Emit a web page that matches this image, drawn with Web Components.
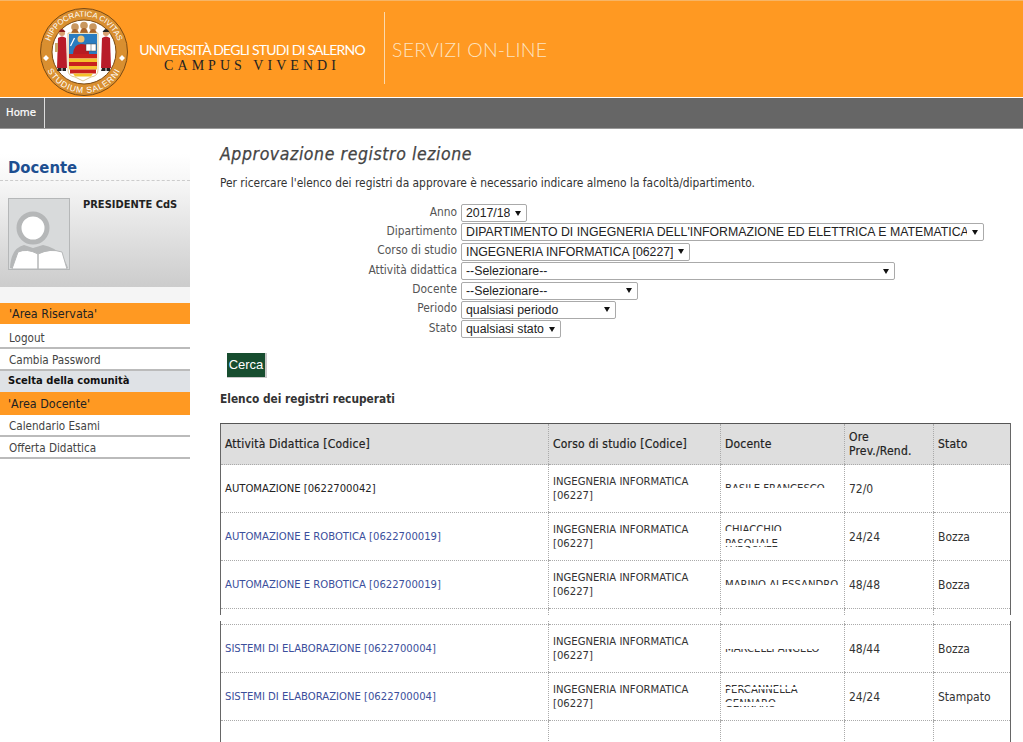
<!DOCTYPE html>
<html lang="it">
<head>
<meta charset="utf-8">
<title>Approvazione registro lezione</title>
<style>
html, body { margin: 0; height: 742px; overflow: hidden; background: #fff; }
body { font: 12px "DejaVu Sans Condensed", "DejaVu Sans", sans-serif; color: #333; }
.page { display: grid; grid-template-columns: 190px 1fr; column-gap: 30px; padding-top: 13px; }
</style>
</head>
<body>
<uni-header></uni-header>
<nav-bar>Home</nav-bar>
<div class="page">
  <side-bar></side-bar>
  <main>
    <search-form></search-form>
    <register-table></register-table>
  </main>
</div>

<script>
const headerTpl = document.createElement("template");
headerTpl.innerHTML = `
<style>
:host { display: flex; align-items: flex-start; height: 97px; background: #ff9922; border-top: 1px solid #f7b566; box-sizing: border-box; padding-left: 37px; }
svg { width: 94px; height: 94px; flex: none; margin-top: 4px; }
.mark { width: 236px; margin: 40px 0 0 3px; text-align: center; }
.uni { font: 400 14px/17px Lato, sans-serif; color: #fff; letter-spacing: -0.78px; white-space: nowrap; }
.motto { font: 14px/15px "Liberation Serif", serif; color: #222; letter-spacing: 4.05px; white-space: nowrap; }
.rule { width: 1px; height: 72px; background: #fbd9ac; margin: 11px 0 0 14px; }
.title { font: 300 19.500px/24px Lato, sans-serif; color: #fde3c0; margin: 37px 0 0 7px; white-space: nowrap; letter-spacing: 0.25px; }
</style>
<svg viewBox="0 0 94 94" role="img" aria-label="Sigillo">
  <defs>
    <path id="arcTop" d="M11.500 47a35.500 35.500 0 0 1 71 0"/>
    <path id="arcBot" d="M8.500 61a41 41 0 0 0 77 0"/>
  </defs>
  <circle cx="47" cy="47" r="43.500" fill="#d98f30" stroke="#7a4a14" stroke-width="1"/>
  <circle cx="47" cy="47" r="32" fill="#fff" stroke="#7a4a14" stroke-width="1"/>
  <text font-family="Liberation Sans, sans-serif" font-size="7.800" fill="#fff"><textPath href="#arcTop" startOffset="50%" text-anchor="middle">HIPPOCRATICA CIVITAS</textPath></text>
  <text font-family="Liberation Sans, sans-serif" font-size="8.500" fill="#fff" letter-spacing="0.8"><textPath href="#arcBot" startOffset="50%" text-anchor="middle">STUDIUM SALERNI</textPath></text>
  <path d="M6 53l3-3 3 3-3 3zM82 53l3-3 3 3-3 3z" fill="#fff"/>
  <!-- three heads above the shield -->
  <g fill="#c9975e"><circle cx="38" cy="22" r="3.800"/><circle cx="47" cy="20.500" r="3.800"/><circle cx="56" cy="22" r="3.800"/></g>
  <path d="M34 29q1-5 4-5t4 5zM43 28q1-5 4-5t4 5zM52 29q1-5 4-5t4 5z" fill="#a8642c"/>
  <!-- shield -->
  <path d="M31 28h30v37q0 6-7 7l-8 4-8-4q-7-1-7-7z" fill="#fff" stroke="#c9a24a" stroke-width=".6"/>
  <rect x="32" y="29" width="28" height="20" fill="#2a7cc0"/>
  <rect x="32" y="49" width="28" height="4.500" fill="#c8201e"/>
  <rect x="32" y="53.500" width="28" height="3.500" fill="#f4c22c"/>
  <rect x="32" y="57" width="28" height="4" fill="#c8201e"/>
  <rect x="32" y="61" width="28" height="3.500" fill="#f4c22c"/>
  <rect x="33" y="64.500" width="26" height="4" fill="#c8201e"/>
  <path d="M36 68.500h20l-2 3h-16z" fill="#f4c22c"/>
  <!-- seated doctor with book -->
  <circle cx="44" cy="34" r="3.500" fill="#f0c070"/>
  <path d="M36 49q1-10 8-10 6 0 8 3v7z" fill="#b81c22"/>
  <path d="M49 39h10v7H49z" fill="#fff" stroke="#444" stroke-width=".5"/>
  <path d="M54 39v7" stroke="#444" stroke-width=".5"/>
  <path d="M33.500 41l4-8" stroke="#fff" stroke-width="1.200"/>
  <!-- side figures -->
  <g>
    <circle cx="25" cy="28" r="3" fill="#d8a070"/>
    <path d="M21.500 27q3.500-6 7 0z" fill="#8c1c1c"/>
    <path d="M21 33q4-3 8 0l1 30h-10z" fill="#b81c2a"/>
    <path d="M21 63h3.500v3h-4.500zM25.500 63h3.500v3h-3.500z" fill="#222"/>
    <path d="M18 38h3v9h-3z" fill="#c9a86a"/>
  </g>
  <g transform="translate(44 0)">
    <circle cx="25" cy="28" r="3" fill="#d8a070"/>
    <path d="M21.500 27q3.500-6 7 0z" fill="#222"/>
    <path d="M21 33q4-3 8 0l1 30h-10z" fill="#b81c2a"/>
    <path d="M21 63h3.500v3h-4.500zM25.500 63h3.500v3h-3.500z" fill="#222"/>
  </g>
</svg>
<div class="mark">
  <div class="uni">UNIVERSITÀ DEGLI STUDI DI SALERNO</div>
  <div class="motto">CAMPUS VIVENDI</div>
</div>
<div class="rule"></div>
<div class="title">SERVIZI ON-LINE</div>
`;
class UniHeader extends HTMLElement {
  constructor() {
    super();
    this.attachShadow({ mode: "open" });
    this.shadowRoot.appendChild(headerTpl.content.cloneNode(true));
  }
}
customElements.define("uni-header", UniHeader);

const navTpl = document.createElement("template");
navTpl.innerHTML = `
<style>
:host { display: flex; height: 32px; box-sizing: border-box; background: #666; border-top: 1px solid #fff; border-bottom: 1px solid #999; font: 11.300px "DejaVu Sans Condensed", sans-serif; color: #fff; -webkit-text-stroke: .2px #fff; }
.tab { width: 45px; padding-left: 6px; box-sizing: border-box; border-right: 1px solid #ddd; line-height: 30px; }
</style>
<div class="tab"><slot></slot></div>
`;
class NavBar extends HTMLElement {
  constructor() {
    super();
    this.attachShadow({ mode: "open" });
    this.shadowRoot.appendChild(navTpl.content.cloneNode(true));
  }
}
customElements.define("nav-bar", NavBar);

const sideTpl = document.createElement("template");
sideTpl.innerHTML = `
<style>
:host { display: block; margin-top: 12px; font: 11.600px "DejaVu Sans Condensed", sans-serif; color: #444; }
.card { height: 133px; box-sizing: border-box; background: linear-gradient(#fff 0, #f6f6f6 22%, #ccc 100%); padding: 0 0 0 8px; }
h2 { margin: 0 0 0 -8px; padding: 0 0 0 8px; height: 26px; font: bold 16.500px/28px "DejaVu Sans Condensed", sans-serif; color: #1d4f91; border-bottom: 1px dashed #ccc; }
.who { display: flex; margin-top: 17px; }
.who svg { width: 62px; height: 72px; flex: none; }
.role { margin: 0 0 0 13px; font: bold 11px/14px "DejaVu Sans Condensed", sans-serif; color: #222; }
.gap { height: 16px; background: #f5f5f5; }
.head, .item, .sec { display: block; box-sizing: border-box; padding-left: 9px; }
.head { height: 21px; line-height: 21px; background: #ff9922; color: #222; font-size: 12.400px; }
.head.b { height: 23px; line-height: 24px; padding-left: 8px; }
.item { height: 22px; line-height: 23px; border-bottom: 2px solid #bbb; }
.item.first { height: 25px; line-height: 28px; }
.sec { height: 21px; line-height: 20px; background: #dfe2e6; color: #111; font-weight: 700; font-size: 11.100px; padding-left: 8px; }
</style>
<div class="card">
  <h2>Docente</h2>
  <div class="who">
    <svg viewBox="0 0 62 72" aria-hidden="true">
      <rect x=".5" y=".5" width="61" height="71" fill="#d8dadb" stroke="#b5b7b8"/>
      <circle cx="25" cy="30" r="14" fill="#fff" stroke="#b5b7b8" stroke-width="5"/>
      <path d="M2 70q1-20 14-23l9 3 10-3q18 3 25 23z" fill="#b5b7b8"/>
      <path d="M10 54q9-4 20 2v15H4zM30 56q12-6 24-2l5 17H30z" fill="#fff" stroke="#b5b7b8"/>
    </svg>
    <p class="role">PRESIDENTE CdS</p>
  </div>
</div>
<div class="gap"></div>
<div class="head">'Area Riservata'</div>
<div class="item first">Logout</div>
<div class="item">Cambia Password</div>
<div class="sec">Scelta della comunità</div>
<div class="head b">'Area Docente'</div>
<div class="item">Calendario Esami</div>
<div class="item">Offerta Didattica</div>
`;
class SideBar extends HTMLElement {
  constructor() {
    super();
    this.attachShadow({ mode: "open" });
    this.shadowRoot.appendChild(sideTpl.content.cloneNode(true));
  }
}
customElements.define("side-bar", SideBar);

// small solid triangle like the old chrome select arrow
const arrow = "url(\"data:image/svg+xml,%3Csvg xmlns='http://www.w3.org/2000/svg' width='6' height='5'%3E%3Cpath d='M0 0h6L3 5z' fill='%23111'/%3E%3C/svg%3E\")";

const formTpl = document.createElement("template");
formTpl.innerHTML = `
<style>
:host { display: block; font: 11.870px "DejaVu Sans Condensed", sans-serif; color: #444; }
h1 { margin: 0; font: italic 17.500px/24px "DejaVu Sans Condensed", sans-serif; color: #444; letter-spacing: .6px; -webkit-text-stroke: .25px #444; }
p { margin: 9px 0 0; line-height: 16px; color: #333; }
.rows { display: grid; grid-template-columns: 237px auto; justify-content: start; column-gap: 4px; row-gap: 1.400px; margin-top: 13px; align-items: center; justify-items: start; }
label { justify-self: end; color: #555; line-height: 14px; margin-top: -3px; }
select { appearance: none; font: 12.300px "Liberation Sans", sans-serif; height: 18px; box-sizing: border-box; color: #222; background: #fff ${arrow} no-repeat right 5px center; padding: 0 16px 0 4px; margin: 0; border: 1px solid #aaa; border-radius: 2px; }
button { display: block; margin: 15px 0 0 7px; width: 40px; height: 25px; box-sizing: border-box; background: #174d2f; color: #fff; border: 0; border-right: 2px solid #c8c8c8; border-bottom: 1px solid #c8c8c8; padding: 0 0 2px; font: 13px "Liberation Sans", sans-serif; }
h3 { margin: 13px 0 0; font: bold 11.800px/16px "DejaVu Sans Condensed", sans-serif; color: #333; }
</style>
<h1>Approvazione registro lezione</h1>
<p>Per ricercare l'elenco dei registri da approvare è necessario indicare almeno la facoltà/dipartimento.</p>
<div class="rows">
  <label>Anno</label><select style="width:66px"><option>2017/18</option></select>
  <label>Dipartimento</label><select style="width:523px"><option>DIPARTIMENTO DI INGEGNERIA DELL'INFORMAZIONE ED ELETTRICA E MATEMATICA APPLICATA</option></select>
  <label>Corso di studio</label><select style="width:229px"><option>INGEGNERIA INFORMATICA [06227]</option></select>
  <label>Attività didattica</label><select style="width:434px"><option>--Selezionare--</option></select>
  <label>Docente</label><select style="width:177px"><option>--Selezionare--</option></select>
  <label>Periodo</label><select style="width:155px"><option>qualsiasi periodo</option></select>
  <label>Stato</label><select style="width:100px"><option>qualsiasi stato</option></select>
</div>
<button type="button">Cerca</button>
<h3>Elenco dei registri recuperati</h3>
`;
class SearchForm extends HTMLElement {
  constructor() {
    super();
    this.attachShadow({ mode: "open" });
    this.shadowRoot.appendChild(formTpl.content.cloneNode(true));
  }
}
customElements.define("search-form", SearchForm);

const tableTpl = document.createElement("template");
tableTpl.innerHTML = `
<style>
:host { display: block; width: 791px; margin-top: 16px; font: 12px/14px "DejaVu Sans Condensed", sans-serif; color: #333; }
table { width: 100%; table-layout: fixed; border-collapse: collapse; border-left: 1px solid #666; border-right: 1px solid #666; }
.top { border-top: 1px solid #555; }
.tail { margin-top: 6px; }
col.a { width: 328px; } col.b { width: 172px; } col.c { width: 124px; } col.d { width: 89px; }
th { background: #dedede; height: 41px; padding: 0 4px; text-align: left; font-weight: 500; color: #222; letter-spacing: .2px; -webkit-text-stroke: .2px #222; }
th, td { border-left: 1px dotted #aaa; border-bottom: 1px dotted #aaa; box-sizing: border-box; }
th:first-child, td:first-child { border-left: 0; }
td { height: 48px; padding: 0 4px; }
td:nth-child(-n+3) { font-size: 11.200px; }
tr.stub td { height: 6px; border-bottom: 0; padding: 0; }
tr.lead td { height: 4px; padding: 0; }
tr.last td { height: 40px; border-bottom: 0; }
a { color: #3b4f9c; text-decoration: none; }
.plain { color: #222; }
.name { position: relative; display: inline-block; }
.name::after { content: ""; position: absolute; inset: 0 -1px; }
.cut-low::after { top: 6px; background: #fff; }
.cut-mid::after { top: 7px; bottom: auto; height: 3px; background: #fff; }
.cut-top::after { bottom: auto; height: 7px; background: #fff; }
.cut-two::after { background: linear-gradient(transparent 8px, #fff 8px, #fff 12px, transparent 12px, transparent 20px, #fff 20px, #fff 23px, transparent 23px); }
.cut-per::after { background: linear-gradient(transparent 4px, #fff 4px, #fff 6px, transparent 6px, transparent 19px, #fff 19px, #fff 23px, transparent 23px); }
</style>
<table class="top">
  <colgroup><col class="a"><col class="b"><col class="c"><col class="d"><col></colgroup>
  <tr><th>Attività Didattica [Codice]</th><th>Corso di studio [Codice]</th><th>Docente</th><th>Ore Prev./Rend.</th><th>Stato</th></tr>
  <tr><td class="plain">AUTOMAZIONE [0622700042]</td><td>INGEGNERIA INFORMATICA [06227]</td><td><span class="name cut-low">BASILE FRANCESCO</span></td><td>72/0</td><td></td></tr>
  <tr><td><a href="#">AUTOMAZIONE E ROBOTICA [0622700019]</a></td><td>INGEGNERIA INFORMATICA [06227]</td><td><span class="name cut-two">CHIACCHIO<br>PASQUALE</span></td><td>24/24</td><td>Bozza</td></tr>
  <tr><td><a href="#">AUTOMAZIONE E ROBOTICA [0622700019]</a></td><td>INGEGNERIA INFORMATICA [06227]</td><td><span class="name cut-mid">MARINO ALESSANDRO</span></td><td>48/48</td><td>Bozza</td></tr>
  <tr class="stub"><td></td><td></td><td></td><td></td><td></td></tr>
</table>
<table class="tail">
  <colgroup><col class="a"><col class="b"><col class="c"><col class="d"><col></colgroup>
  <tr class="lead"><td></td><td></td><td></td><td></td><td></td></tr>
  <tr><td><a href="#">SISTEMI DI ELABORAZIONE [0622700004]</a></td><td>INGEGNERIA INFORMATICA [06227]</td><td><span class="name cut-top">MARCELLI ANGELO</span></td><td>48/44</td><td>Bozza</td></tr>
  <tr><td><a href="#">SISTEMI DI ELABORAZIONE [0622700004]</a></td><td>INGEGNERIA INFORMATICA [06227]</td><td><span class="name cut-per">PERCANNELLA GENNARO</span></td><td>24/24</td><td>Stampato</td></tr>
  <tr class="last"><td></td><td></td><td></td><td></td><td></td></tr>
</table>
`;
class RegisterTable extends HTMLElement {
  constructor() {
    super();
    this.attachShadow({ mode: "open" });
    this.shadowRoot.appendChild(tableTpl.content.cloneNode(true));
  }
}
customElements.define("register-table", RegisterTable);
</script>
</body>
</html>
